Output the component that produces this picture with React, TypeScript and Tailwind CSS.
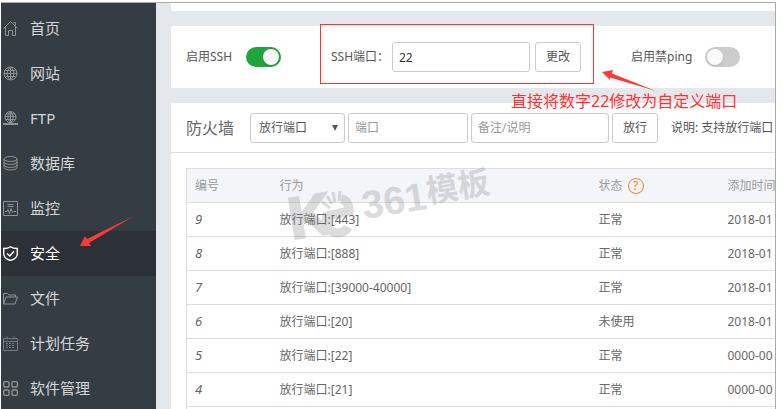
import React, { useState } from 'react';

interface NavItem {
    id: string;
    label: string;
    icon: React.ReactNode;
}

interface Rule {
    id: number;
    action: string;
    status: string;
    time: string;
}

const NAV_ITEMS: NavItem[] = [
    {
        id: 'home',
        label: '首页',
        icon: <path d="M.5 7.5l7-7 7 7M2.5 6v8.5h3v-5h4v5h3V6M10.5 1.5h2v3" />,
    },
    {
        id: 'site',
        label: '网站',
        icon: <path d="M7.5 1a6.5 6.5 0 1 0 0 13 6.5 6.5 0 1 0 0-13zM7.5 1v13M1 7.5h13M2.5 4.5h10M2.5 10.5h10M7.5 1c-4.5 4-4.5 9 0 13M7.5 1c4.5 4 4.5 9 0 13" />,
    },
    {
        id: 'ftp',
        label: 'FTP',
        icon: (
            <>
                <path d="M7.5.5a5.5 5.5 0 1 0 0 11 5.5 5.5 0 1 0 0-11zM7.5 1v11M2 5.5h11M3 3h9M3 8.5h9M7.5.5c-3.5 3.5-3.5 7.5 0 11M7.5.5c3.5 3.5 3.5 7.5 0 11" />
                <path strokeWidth="2" d="M0 13h15" />
            </>
        ),
    },
    {
        id: 'database',
        label: '数据库',
        icon: (
            <>
                <ellipse cx="7.5" cy="3" rx="6.5" ry="2.5" />
                <path d="M1 3v8.5c0 3.3 13 3.3 13 0V3M1 6c0 3.3 13 3.3 13 0M1 9c0 3.3 13 3.3 13 0" />
            </>
        ),
    },
    {
        id: 'monitor',
        label: '监控',
        icon: <path d="M.5.5h14v14H.5zM4.5 3.5h6M4.5 5.5h6M2 10.5h2l1-2 1.5 4 1.5-5 1.5 4 1-1H13" />,
    },
    {
        id: 'security',
        label: '安全',
        icon: <path strokeWidth="1.4" d="M7.5.7C5.5 2.2 3.5 2.5.7 2.5V8c0 3.2 3 5.3 6.8 6.5 3.8-1.2 6.8-3.3 6.8-6.5V2.5C11.5 2.5 9.5 2.2 7.5.7zM4 7.5 6.8 10 11 5.2" />,
    },
    {
        id: 'files',
        label: '文件',
        icon: <path d="M.5 13V2.5h4L6 4h6.5v2M.5 13 3 6h11.5L12 13z" />,
    },
    {
        id: 'cron',
        label: '计划任务',
        icon: (
            <g opacity="0.7">
                <path d="M.5 2.5h14v12H.5zM.5 5.5h14M4 .5v3M11 .5v3" />
                <path strokeDasharray="2 1" d="M3 7.5h9M3 9.5h9M3 11.5h9" />
            </g>
        ),
    },
    {
        id: 'soft',
        label: '软件管理',
        icon: (
            <g strokeWidth="1.3">
                <rect x=".7" y=".7" width="5.3" height="5.3" rx="1" />
                <rect x="9" y=".7" width="5.3" height="5.3" rx="1" />
                <rect x=".7" y="9" width="5.3" height="5.3" rx="1" />
                <rect x="9" y="9" width="5.3" height="5.3" rx="1" />
            </g>
        ),
    },
];

const RULES: Rule[] = [
    { id: 9, action: '放行端口:[443]', status: '正常', time: '2018-01' },
    { id: 8, action: '放行端口:[888]', status: '正常', time: '2018-01' },
    { id: 7, action: '放行端口:[39000-40000]', status: '正常', time: '2018-01' },
    { id: 6, action: '放行端口:[20]', status: '未使用', time: '2018-01' },
    { id: 5, action: '放行端口:[22]', status: '正常', time: '0000-00' },
    { id: 4, action: '放行端口:[21]', status: '正常', time: '0000-00' },
];

const FIELD = 'h-[30px] shrink-0 rounded-[3px] border border-[#ccc] bg-white text-xs';

const Sidebar: React.FC<{ active: string; onSelect: (id: string) => void }> = ({ active, onSelect }) => (
    <nav className="w-[155px] shrink-0 bg-[#353d44] pt-[3px]">
        {NAV_ITEMS.map((item) => (
            <a
                key={item.id}
                href={`#${item.id}`}
                onClick={() => onSelect(item.id)}
                className={`flex h-[45px] items-center gap-3 pb-px pl-0.5 text-[15px] ${
                    item.id === active ? 'bg-[#2c3138] text-white' : 'text-[#d4d6d8]'
                }`}
            >
                <svg
                    viewBox="0 0 15 15"
                    className={`h-[15px] w-[15px] shrink-0 ${item.id === active ? 'text-white' : 'text-[#8f9498]'}`}
                    fill="none"
                    stroke="currentColor"
                    aria-hidden="true"
                >
                    {item.icon}
                </svg>
                {item.label}
            </a>
        ))}
    </nav>
);

const Toggle: React.FC<{ id: string; checked: boolean; onChange: (v: boolean) => void }> = ({ id, checked, onChange }) => (
    <input
        id={id}
        type="checkbox"
        role="switch"
        checked={checked}
        onChange={(e) => onChange(e.target.checked)}
        className="flex h-5 w-[35px] shrink-0 cursor-pointer appearance-none items-center rounded-full bg-[#ccc] px-0.5 before:h-4 before:w-4 before:rounded-full before:bg-[#fafafa] before:shadow checked:justify-end checked:bg-[#20a53a]"
    />
);

// Faint logo printed over the table
const Watermark = () => (
    <svg
        viewBox="0 0 212 80"
        className="pointer-events-none absolute top-[165px] left-[284px] h-20 w-[212px] fill-[#777] font-['Liberation_Sans','Noto_Sans_CJK_SC',sans-serif] font-bold opacity-25"
        aria-hidden="true"
    >
        <text x="8" y="74" fontSize="58" stroke="#777" strokeWidth="3" transform="rotate(-9 8 74)">K</text>
        <g fill="none" stroke="#777">
            <path strokeWidth="9" d="M57 34c6 1 8 6 8 12L43 51c-2 10 3 17 11 17 4 0 8-2 10-6" />
            <path strokeWidth="3" d="M46 43l-8-6M48 39l-5-8M51 37l-2-10M55 36l1-10" />
        </g>
        <text x="80" y="54" fontSize="39" transform="rotate(-9 80 54)">361</text>
        <text x="144" y="38" fontSize="32" transform="rotate(-9 144 38)">模板</text>
    </svg>
);

export default function App() {
    const [active, setActive] = useState('security');
    const [sshOn, setSshOn] = useState(true);
    const [pingOff, setPingOff] = useState(false);
    const [sshPort, setSshPort] = useState('22');

    return (
        <div className="h-screen bg-white pt-0.5 pr-[7px] pl-px font-['Noto_Sans','Noto_Sans_CJK_SC',sans-serif] text-xs text-[#555]">
            <div className="flex h-full overflow-hidden border-t border-r border-[#aaa]">
                <Sidebar active={active} onSelect={setActive} />

                <main className="flex min-w-0 flex-1 flex-col gap-[15px] overflow-hidden bg-[#e4e8ed] pl-[15px]">
                    <div className="h-2 shrink-0 bg-white" />

                    {/* SSH settings */}
                    <section className="flex h-[62px] shrink-0 items-center bg-white pl-[15px] whitespace-nowrap">
                        <label htmlFor="ssh" className="w-[60px] shrink-0">启用SSH</label>
                        <Toggle id="ssh" checked={sshOn} onChange={setSshOn} />
                        <label htmlFor="ssh-port" className="ml-[50px] w-[61px] shrink-0">SSH端口：</label>
                        <input
                            id="ssh-port"
                            value={sshPort}
                            onChange={(e) => setSshPort(e.target.value)}
                            className={`${FIELD} w-[138px] px-1.5 text-[#333]`}
                        />
                        <button className={`${FIELD} ml-[5px] w-[46px]`}>更改</button>
                        <label htmlFor="ping" className="ml-[50px] w-[74px] shrink-0">启用禁ping</label>
                        <Toggle id="ping" checked={pingOff} onChange={setPingOff} />
                    </section>

                    {/* Firewall */}
                    <section className="flex-1 bg-white">
                        <div className="flex h-[50px] items-center gap-[3px] border-b border-[#ddd] pl-[15px] whitespace-nowrap">
                            <h2 className="w-[61px] shrink-0 text-base text-[#666]">防火墙</h2>
                            <div className="relative shrink-0">
                                <select aria-label="类型" className={`${FIELD} w-[95px] appearance-none px-2`}>
                                    <option>放行端口</option>
                                </select>
                                <svg viewBox="0 0 6 6" className="pointer-events-none absolute top-3 right-[7px] h-1.5 w-1.5 fill-[#555]" aria-hidden="true">
                                    <path d="M0 0h6L3 6z" />
                                </svg>
                            </div>
                            <input aria-label="端口" placeholder="端口" className={`${FIELD} w-[120px] px-1.5 placeholder:text-[#999]`} />
                            <input aria-label="备注/说明" placeholder="备注/说明" className={`${FIELD} w-[138px] px-1.5 placeholder:text-[#999]`} />
                            <button className={`${FIELD} w-[46px]`}>放行</button>
                            <span className="ml-2.5">说明: 支持放行端口</span>
                        </div>

                        <div className="overflow-hidden pt-[15px] pl-[15px]">
                            <table className="w-[780px] table-fixed border-collapse border border-[#ddd] text-left">
                                <thead>
                                    <tr className="h-[34px] border-b border-[#ddd] bg-[#f4f5f9] text-[#999]">
                                        <th className="w-[85px] px-2 font-normal">编号</th>
                                        <th className="w-[319px] px-2 font-normal">行为</th>
                                        <th className="w-[129px] px-2 font-normal">
                                            <span className="flex items-center gap-[5px]">
                                                状态
                                                <a
                                                    href="#help"
                                                    className="flex h-4 w-4 items-center justify-center rounded-full border border-[#f0841b] text-xs text-[#f0841b]"
                                                >
                                                    ?
                                                </a>
                                            </span>
                                        </th>
                                        <th className="px-2 font-normal">添加时间</th>
                                    </tr>
                                </thead>
                                <tbody className="text-[#666]">
                                    {RULES.map((rule) => (
                                        <tr key={rule.id} className="h-[34px] border-b border-[#ddd]">
                                            <td className="px-2 text-[13px] italic">{rule.id}</td>
                                            <td className="px-2">{rule.action}</td>
                                            <td className="px-2">{rule.status}</td>
                                            <td className="px-2">{rule.time}</td>
                                        </tr>
                                    ))}
                                    <tr className="h-[34px]">
                                        <td colSpan={4} />
                                    </tr>
                                </tbody>
                            </table>
                        </div>
                    </section>
                </main>
            </div>

            <Watermark />

            {/* Tutorial marks */}
            <div className="pointer-events-none absolute top-6 left-[320px] h-[60px] w-[274px] border border-[#f33]" />
            <p className="pointer-events-none absolute top-[89px] left-[511px] text-base whitespace-nowrap text-[#f33]">
                直接将数字22修改为自定义端口
            </p>
            <svg viewBox="0 0 54 22" className="pointer-events-none absolute top-[70px] left-[602px] h-[22px] w-[54px] fill-[#fb3b36]" aria-hidden="true">
                <path d="M0 2 11 0l-1 3.5L54 21 8 7.5V10z" />
            </svg>
            <svg viewBox="0 0 54 30" className="pointer-events-none absolute top-[216px] left-[80px] h-[30px] w-[54px] fill-[#fb3b36]" aria-hidden="true">
                <path d="M0 30 5 20l2 3L54 0 9 27l2 3z" />
            </svg>
        </div>
    );
}
